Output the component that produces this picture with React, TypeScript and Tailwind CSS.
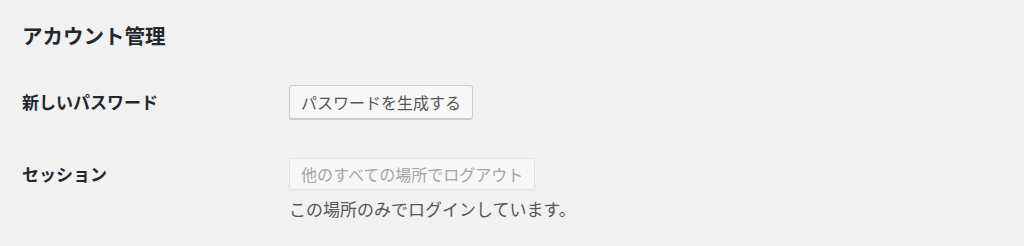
import React from "react";

const font = { fontFamily: '"Noto Sans CJK JP", "Noto Sans", sans-serif' };

export default function App() {
  return (
    <div className="min-h-[246px] bg-[#f1f1f1] pl-[22px] pt-[22px]" style={font}>
      <h2 className="text-[20.5px] font-bold leading-[26px] text-[#23282d]">アカウント管理</h2>

      <div className="mt-[37px] flex items-center">
        <div className="w-[267px] text-[17px] font-bold text-[#23282d]">新しいパスワード</div>
        <button className="h-[34px] rounded-[3px] border border-[#cccccc] bg-[#f7f7f7] px-[11px] text-[16px] leading-none text-[#555555] shadow-[0_1px_0_#cccccc]">
          パスワードを生成する
        </button>
      </div>

      <div className="mt-[39px] flex">
        <div className="flex h-[32px] w-[267px] items-center text-[17px] font-bold text-[#23282d]">セッション</div>
        <div className="flex flex-col items-start">
          <button
            disabled
            className="h-[32px] rounded-[3px] border border-[#e2e2e2] bg-[#f7f7f7] px-[11px] text-[16px] leading-none text-[#a0a5aa]"
          >
            他のすべての場所でログアウト
          </button>
          <p className="mt-[7px] text-[17px] leading-[24px] text-[#555555]">この場所のみでログインしています。</p>
        </div>
      </div>
    </div>
  );
}
